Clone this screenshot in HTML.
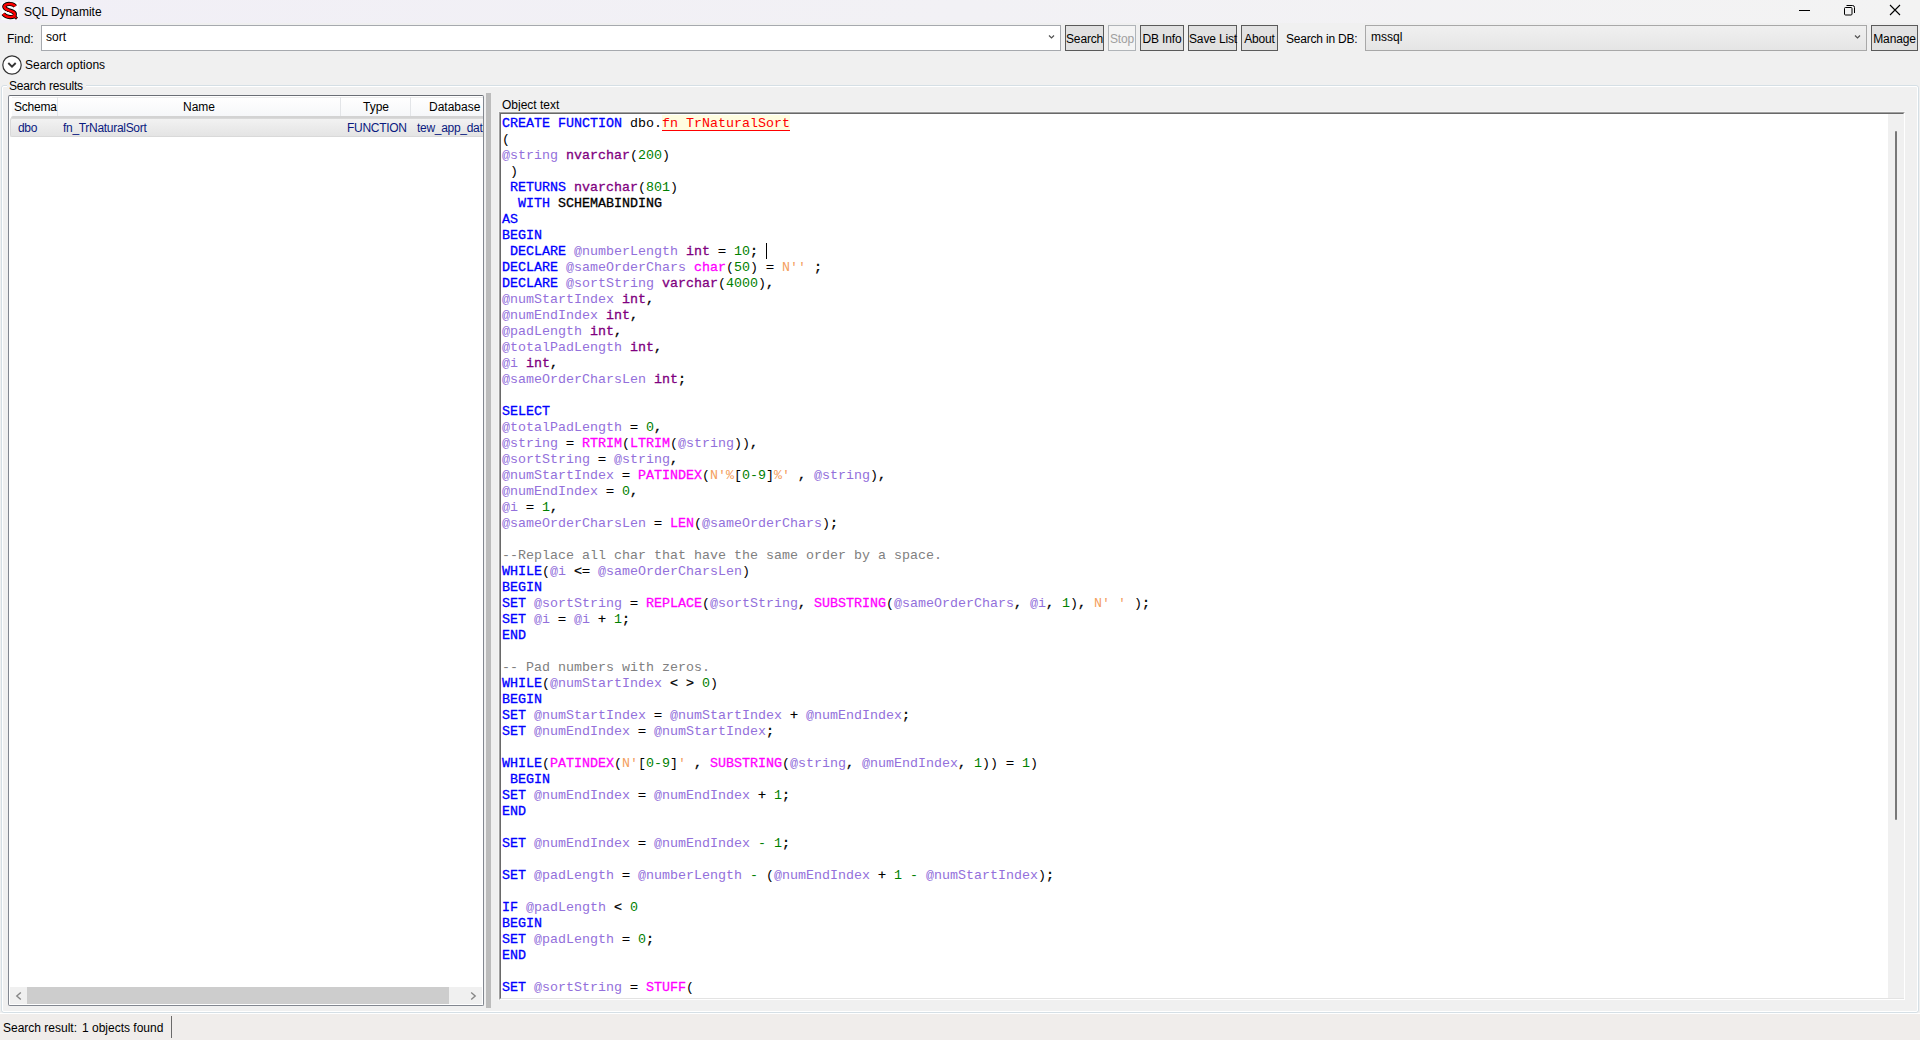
<!DOCTYPE html>
<html><head><meta charset="utf-8">
<style>
*{box-sizing:border-box;margin:0;padding:0}
html,body{width:1920px;height:1040px;overflow:hidden;background:#f0f0f0;font-family:"Liberation Sans",sans-serif;font-size:12px;color:#000}
.a{position:absolute}
#title{left:0;top:0;width:1920px;height:23px;background:linear-gradient(90deg,#f1eff6 0%,#f2f1f5 50%,#f3f3f3 100%)}
.t{white-space:nowrap;line-height:14px}
.btn{border:1px solid #5a5a5a;background:#e1e1e1;height:26px;top:25px;text-align:center;line-height:24px;padding-top:1px;white-space:nowrap;letter-spacing:-0.15px}
.btn.dis{border-color:#b0b4b8;background:#f4f4f4;color:#a0a0a0}
#code{left:501px;top:115px;width:1387px;height:883px;font-family:"Liberation Mono",monospace;font-size:13.33px;line-height:16px;white-space:pre;padding-top:1px;padding-left:1px;overflow:hidden}
.k{color:#0000ff;-webkit-text-stroke:0.3px #0000ff}
.d{color:#800080;-webkit-text-stroke:0.3px #800080}
.f{color:#ff00ff;-webkit-text-stroke:0.3px #ff00ff}
.v{color:#9370db}
.n{color:#008000}
.s{color:#f4a060}
.c{color:#808080}
.o{-webkit-text-stroke:0.3px #000}
.hl{color:#ff0000}
</style></head><body>
<div id="title" class="a"></div>
<svg class="a" style="left:0px;top:0px" width="22" height="22" viewBox="0 0 22 22">
<rect x="1.5" y="2" width="17" height="18" fill="#fbfbfd"/>
<path d="M15.2 6.3 C13.5 3.6 7 3.2 5 5.2 C3.2 7.2 5.5 9.2 9 10.3 C12.8 11.4 15.2 12.2 14.8 14.8 C14.2 17.8 6.5 18.2 3.2 13.8" fill="none" stroke="#000" stroke-width="4.2"/>
<path d="M13.5 15.5 L17 18.6" stroke="#000" stroke-width="3"/>
<path d="M15.2 6.3 C13.5 3.6 7 3.2 5 5.2 C3.2 7.2 5.5 9.2 9 10.3 C12.8 11.4 15.2 12.2 14.8 14.8 C14.2 17.8 6.5 18.2 3.2 13.8" fill="none" stroke="#ff0000" stroke-width="2.4"/>
<path d="M14 16 L16.5 18.2" stroke="#ff0000" stroke-width="1.4"/>
<path d="M5.5 12.5 L9 12.5 M6.5 11.5 L5.5 12.5 L6.5 13.5" stroke="#fff" stroke-width="1"/>
</svg>
<div class="a t" style="left:24px;top:5px">SQL Dynamite</div>
<!-- window controls -->
<div class="a" style="left:1799px;top:10px;width:11px;height:1px;background:#000"></div>
<svg class="a" style="left:1843px;top:4px" width="13" height="12" viewBox="0 0 13 12"><rect x="1.5" y="3.5" width="7.5" height="7.5" rx="1" fill="none" stroke="#000"/><path d="M3.5 1.5 H9.5 Q11.5 1.5 11.5 3.5 V9" fill="none" stroke="#000"/></svg>
<svg class="a" style="left:1889px;top:4px" width="12" height="12" viewBox="0 0 12 12"><path d="M1 1 L11 11 M11 1 L1 11" stroke="#000" stroke-width="1.1"/></svg>

<!-- toolbar -->
<div class="a t" style="left:7px;top:32px">Find:</div>
<div class="a" style="left:41px;top:25px;width:1020px;height:26px;border:1px solid #a6a9ae;background:#fff"></div>
<div class="a t" style="left:46px;top:30px">sort</div>
<svg class="a" style="left:1048px;top:34px" width="8" height="6" viewBox="0 0 8 6"><path d="M1 1.5 L3.5 4 L6 1.5" fill="none" stroke="#505050" stroke-width="1.2"/></svg>
<div class="a btn" style="left:1065px;width:39px">Search</div>
<div class="a btn dis" style="left:1108px;width:28px">Stop</div>
<div class="a btn" style="left:1140px;width:44px">DB Info</div>
<div class="a btn" style="left:1188px;width:49px">Save List</div>
<div class="a btn" style="left:1241px;width:37px">About</div>
<div class="a t" style="left:1286px;top:32px;letter-spacing:-0.2px">Search in DB:</div>
<div class="a" style="left:1365px;top:25px;width:502px;height:26px;border:1px solid #a8a8a8;background:linear-gradient(#f0f0f0,#e5e5e5)"></div>
<div class="a t" style="left:1371px;top:30px">mssql</div>
<svg class="a" style="left:1854px;top:34px" width="8" height="6" viewBox="0 0 8 6"><path d="M1 1.5 L3.5 4 L6 1.5" fill="none" stroke="#505050" stroke-width="1.2"/></svg>
<div class="a btn" style="left:1871px;width:47px">Manage</div>

<!-- search options -->
<svg class="a" style="left:2px;top:55px" width="20" height="20" viewBox="0 0 20 20"><circle cx="10" cy="10" r="9.2" fill="#fff" stroke="#333" stroke-width="1.2"/><path d="M6.3 8 L10 11.7 L13.7 8" fill="none" stroke="#333" stroke-width="1.9"/></svg>
<div class="a t" style="left:25px;top:58px">Search options</div>

<!-- group box -->
<div class="a" style="left:1px;top:85px;width:1918px;height:928px;border:1px solid #d5dfe5;border-radius:3px"></div>
<div class="a" style="left:2px;top:86px;width:1916px;height:926px;border:1px solid #fff;border-radius:2px"></div>
<div class="a t" style="left:7px;top:79px;background:#f0f0f0;padding:0 3px 0 2px;letter-spacing:-0.2px">Search results</div>

<!-- list view -->
<div class="a" style="left:8px;top:95px;width:476px;height:911px;border:1px solid #828790;border-top-color:#6a6e75;background:#fff;border-radius:2px"></div>
<div class="a" style="left:12px;top:97px;width:471px;height:19px;background:linear-gradient(#fff,#f6f7f9)"></div>
<div class="a" style="left:11px;top:116px;width:472px;height:2px;background:#d3d3d3;border-radius:2px 0 0 0"></div>
<div class="a" style="left:12px;top:97px;width:471px;height:1px;background:#ededed"></div>
<div class="a" style="left:57px;top:97px;width:1px;height:19px;background:#e3e5e8"></div>
<div class="a" style="left:340px;top:97px;width:1px;height:19px;background:#e3e5e8"></div>
<div class="a" style="left:410px;top:97px;width:1px;height:19px;background:#e3e5e8"></div>
<div class="a t" style="left:14px;top:100px;letter-spacing:-0.2px">Schema</div>
<div class="a t" style="left:183px;top:100px">Name</div>
<div class="a t" style="left:363px;top:100px">Type</div>
<div class="a t" style="left:429px;top:100px">Database</div>
<div class="a" style="left:10px;top:118px;width:473px;height:19px;border:1px solid #d9d9d9;border-right:none;border-radius:2px 0 0 2px;background:linear-gradient(#f2f2f2,#e4e4e4)"></div>
<div class="a" style="left:9px;top:118px;width:474px;height:19px;overflow:hidden">
<div class="a t" style="left:9px;top:3px;color:#0a1a80;letter-spacing:-0.3px">dbo</div>
<div class="a t" style="left:54px;top:3px;color:#0a1a80;letter-spacing:-0.3px">fn_TrNaturalSort</div>
<div class="a t" style="left:338px;top:3px;color:#0a1a80;letter-spacing:-0.3px">FUNCTION</div>
<div class="a t" style="left:408px;top:3px;color:#0a1a80;letter-spacing:-0.3px">tew_app_data</div>
</div>
<!-- h scrollbar -->
<div class="a" style="left:10px;top:987px;width:472px;height:17px;background:#f0f0f0"></div>
<div class="a" style="left:27px;top:987px;width:422px;height:17px;background:#cdcdcd"></div>
<svg class="a" style="left:14px;top:991px" width="9" height="10" viewBox="0 0 9 10"><path d="M6.8 1.5 L2.8 5 L6.8 8.5" fill="none" stroke="#858585" stroke-width="1.4"/></svg>
<svg class="a" style="left:469px;top:991px" width="9" height="10" viewBox="0 0 9 10"><path d="M2.2 1.5 L6.2 5 L2.2 8.5" fill="none" stroke="#858585" stroke-width="1.4"/></svg>

<!-- splitter -->
<div class="a" style="left:486px;top:93px;width:5px;height:915px;background:#bcbcbc"></div>

<!-- object text -->
<div class="a t" style="left:502px;top:98px">Object text</div>
<div class="a" style="left:498px;top:111px;width:1408px;height:890px;border-top:1px solid #f5f5f5;border-left:1px solid #f5f5f5"></div>
<div class="a" style="left:499px;top:112px;width:1406px;height:888px;border-top:1px solid #a0a0a0;border-left:1px solid #a0a0a0;border-right:1px solid #fff;border-bottom:1px solid #fff"></div>
<div class="a" style="left:500px;top:113px;width:1404px;height:886px;border-top:1px solid #696969;border-left:1px solid #696969;border-right:1px solid #e3e3e3;border-bottom:1px solid #e3e3e3"></div>
<!-- v scrollbar -->
<div class="a" style="left:1888px;top:114px;width:16px;height:884px;background:#f0f0f0"></div>
<div class="a" style="left:1895px;top:131px;width:2px;height:689px;background:#787878;border-radius:1px"></div>

<div class="a" style="left:501px;top:114px;width:1387px;height:884px;background:#fff"></div>
<div class="a" style="left:662px;top:115px;width:128px;height:15px;background:#fffde0"></div>
<div class="a" style="left:662px;top:130px;width:128px;height:1px;background:#ff0000"></div>
<div id="code" class="a"><span class="k">CREATE</span> <span class="k">FUNCTION</span> dbo.<span class="hl">fn TrNaturalSort</span>
<span>(</span>
<span class="v">@string</span> <span class="d">nvarchar</span>(<span class="n">200</span>)
 )
 <span class="k">RETURNS</span> <span class="d">nvarchar</span>(<span class="n">801</span>)
  <span class="k">WITH</span> <span class="o">SCHEMABINDING</span>
<span class="k">AS</span>
<span class="k">BEGIN</span>
 <span class="k">DECLARE</span> <span class="v">@numberLength</span> <span class="d">int</span> <span class="o">=</span> <span class="n">10</span><span class="o">;</span> 
<span class="k">DECLARE</span> <span class="v">@sameOrderChars</span> <span class="f">char</span>(<span class="n">50</span>) <span class="o">=</span> <span class="s">N''</span> <span class="o">;</span>
<span class="k">DECLARE</span> <span class="v">@sortString</span> <span class="d">varchar</span>(<span class="n">4000</span>)<span class="o">,</span>
<span class="v">@numStartIndex</span> <span class="d">int</span><span class="o">,</span>
<span class="v">@numEndIndex</span> <span class="d">int</span><span class="o">,</span>
<span class="v">@padLength</span> <span class="d">int</span><span class="o">,</span>
<span class="v">@totalPadLength</span> <span class="d">int</span><span class="o">,</span>
<span class="v">@i</span> <span class="d">int</span><span class="o">,</span>
<span class="v">@sameOrderCharsLen</span> <span class="d">int</span><span class="o">;</span>

<span class="k">SELECT</span>
<span class="v">@totalPadLength</span> <span class="o">=</span> <span class="n">0</span><span class="o">,</span>
<span class="v">@string</span> <span class="o">=</span> <span class="f">RTRIM</span>(<span class="f">LTRIM</span>(<span class="v">@string</span>))<span class="o">,</span>
<span class="v">@sortString</span> <span class="o">=</span> <span class="v">@string</span><span class="o">,</span>
<span class="v">@numStartIndex</span> <span class="o">=</span> <span class="f">PATINDEX</span>(<span class="s">N'%</span>[<span class="n">0-9</span>]<span class="s">%'</span> <span class="o">,</span> <span class="v">@string</span>)<span class="o">,</span>
<span class="v">@numEndIndex</span> <span class="o">=</span> <span class="n">0</span><span class="o">,</span>
<span class="v">@i</span> <span class="o">=</span> <span class="n">1</span><span class="o">,</span>
<span class="v">@sameOrderCharsLen</span> <span class="o">=</span> <span class="f">LEN</span>(<span class="v">@sameOrderChars</span>)<span class="o">;</span>

<span class="c">--Replace all char that have the same order by a space.</span>
<span class="k">WHILE</span>(<span class="v">@i</span> <span class="o">&lt;=</span> <span class="v">@sameOrderCharsLen</span>)
<span class="k">BEGIN</span>
<span class="k">SET</span> <span class="v">@sortString</span> <span class="o">=</span> <span class="f">REPLACE</span>(<span class="v">@sortString</span><span class="o">,</span> <span class="f">SUBSTRING</span>(<span class="v">@sameOrderChars</span><span class="o">,</span> <span class="v">@i</span><span class="o">,</span> <span class="n">1</span>)<span class="o">,</span> <span class="s">N' '</span> )<span class="o">;</span>
<span class="k">SET</span> <span class="v">@i</span> <span class="o">=</span> <span class="v">@i</span> <span class="o">+</span> <span class="n">1</span><span class="o">;</span>
<span class="k">END</span>

<span class="c">-- Pad numbers with zeros.</span>
<span class="k">WHILE</span>(<span class="v">@numStartIndex</span> <span class="o">&lt;</span> <span class="o">&gt;</span> <span class="n">0</span>)
<span class="k">BEGIN</span>
<span class="k">SET</span> <span class="v">@numStartIndex</span> <span class="o">=</span> <span class="v">@numStartIndex</span> <span class="o">+</span> <span class="v">@numEndIndex</span><span class="o">;</span>
<span class="k">SET</span> <span class="v">@numEndIndex</span> <span class="o">=</span> <span class="v">@numStartIndex</span><span class="o">;</span>

<span class="k">WHILE</span>(<span class="f">PATINDEX</span>(<span class="s">N'</span>[<span class="n">0-9</span>]<span class="s">'</span> <span class="o">,</span> <span class="f">SUBSTRING</span>(<span class="v">@string</span><span class="o">,</span> <span class="v">@numEndIndex</span><span class="o">,</span> <span class="n">1</span>)) <span class="o">=</span> <span class="n">1</span>)
 <span class="k">BEGIN</span>
<span class="k">SET</span> <span class="v">@numEndIndex</span> <span class="o">=</span> <span class="v">@numEndIndex</span> <span class="o">+</span> <span class="n">1</span><span class="o">;</span>
<span class="k">END</span>

<span class="k">SET</span> <span class="v">@numEndIndex</span> <span class="o">=</span> <span class="v">@numEndIndex</span> <span class="n">-</span> <span class="n">1</span><span class="o">;</span>

<span class="k">SET</span> <span class="v">@padLength</span> <span class="o">=</span> <span class="v">@numberLength</span> <span class="n">-</span> (<span class="v">@numEndIndex</span> <span class="o">+</span> <span class="n">1</span> <span class="n">-</span> <span class="v">@numStartIndex</span>)<span class="o">;</span>

<span class="k">IF</span> <span class="v">@padLength</span> <span class="o">&lt;</span> <span class="n">0</span>
<span class="k">BEGIN</span>
<span class="k">SET</span> <span class="v">@padLength</span> <span class="o">=</span> <span class="n">0</span><span class="o">;</span>
<span class="k">END</span>

<span class="k">SET</span> <span class="v">@sortString</span> <span class="o">=</span> <span class="f">STUFF</span>(
</div>
<!-- caret -->
<div class="a" style="left:766px;top:243px;width:1px;height:16px;background:#000"></div>

<!-- status bar -->
<div class="a" style="left:0;top:1013px;width:1920px;height:1px;background:#fff"></div>
<div class="a" style="left:0;top:1014px;width:1920px;height:26px;background:#f0edeb"></div>
<div class="a t" style="left:3px;top:1021px">Search result:</div>
<div class="a t" style="left:82px;top:1021px">1 objects found</div>
<div class="a" style="left:171px;top:1016px;width:1px;height:22px;background:#6a6a6a"></div>
</body></html>
